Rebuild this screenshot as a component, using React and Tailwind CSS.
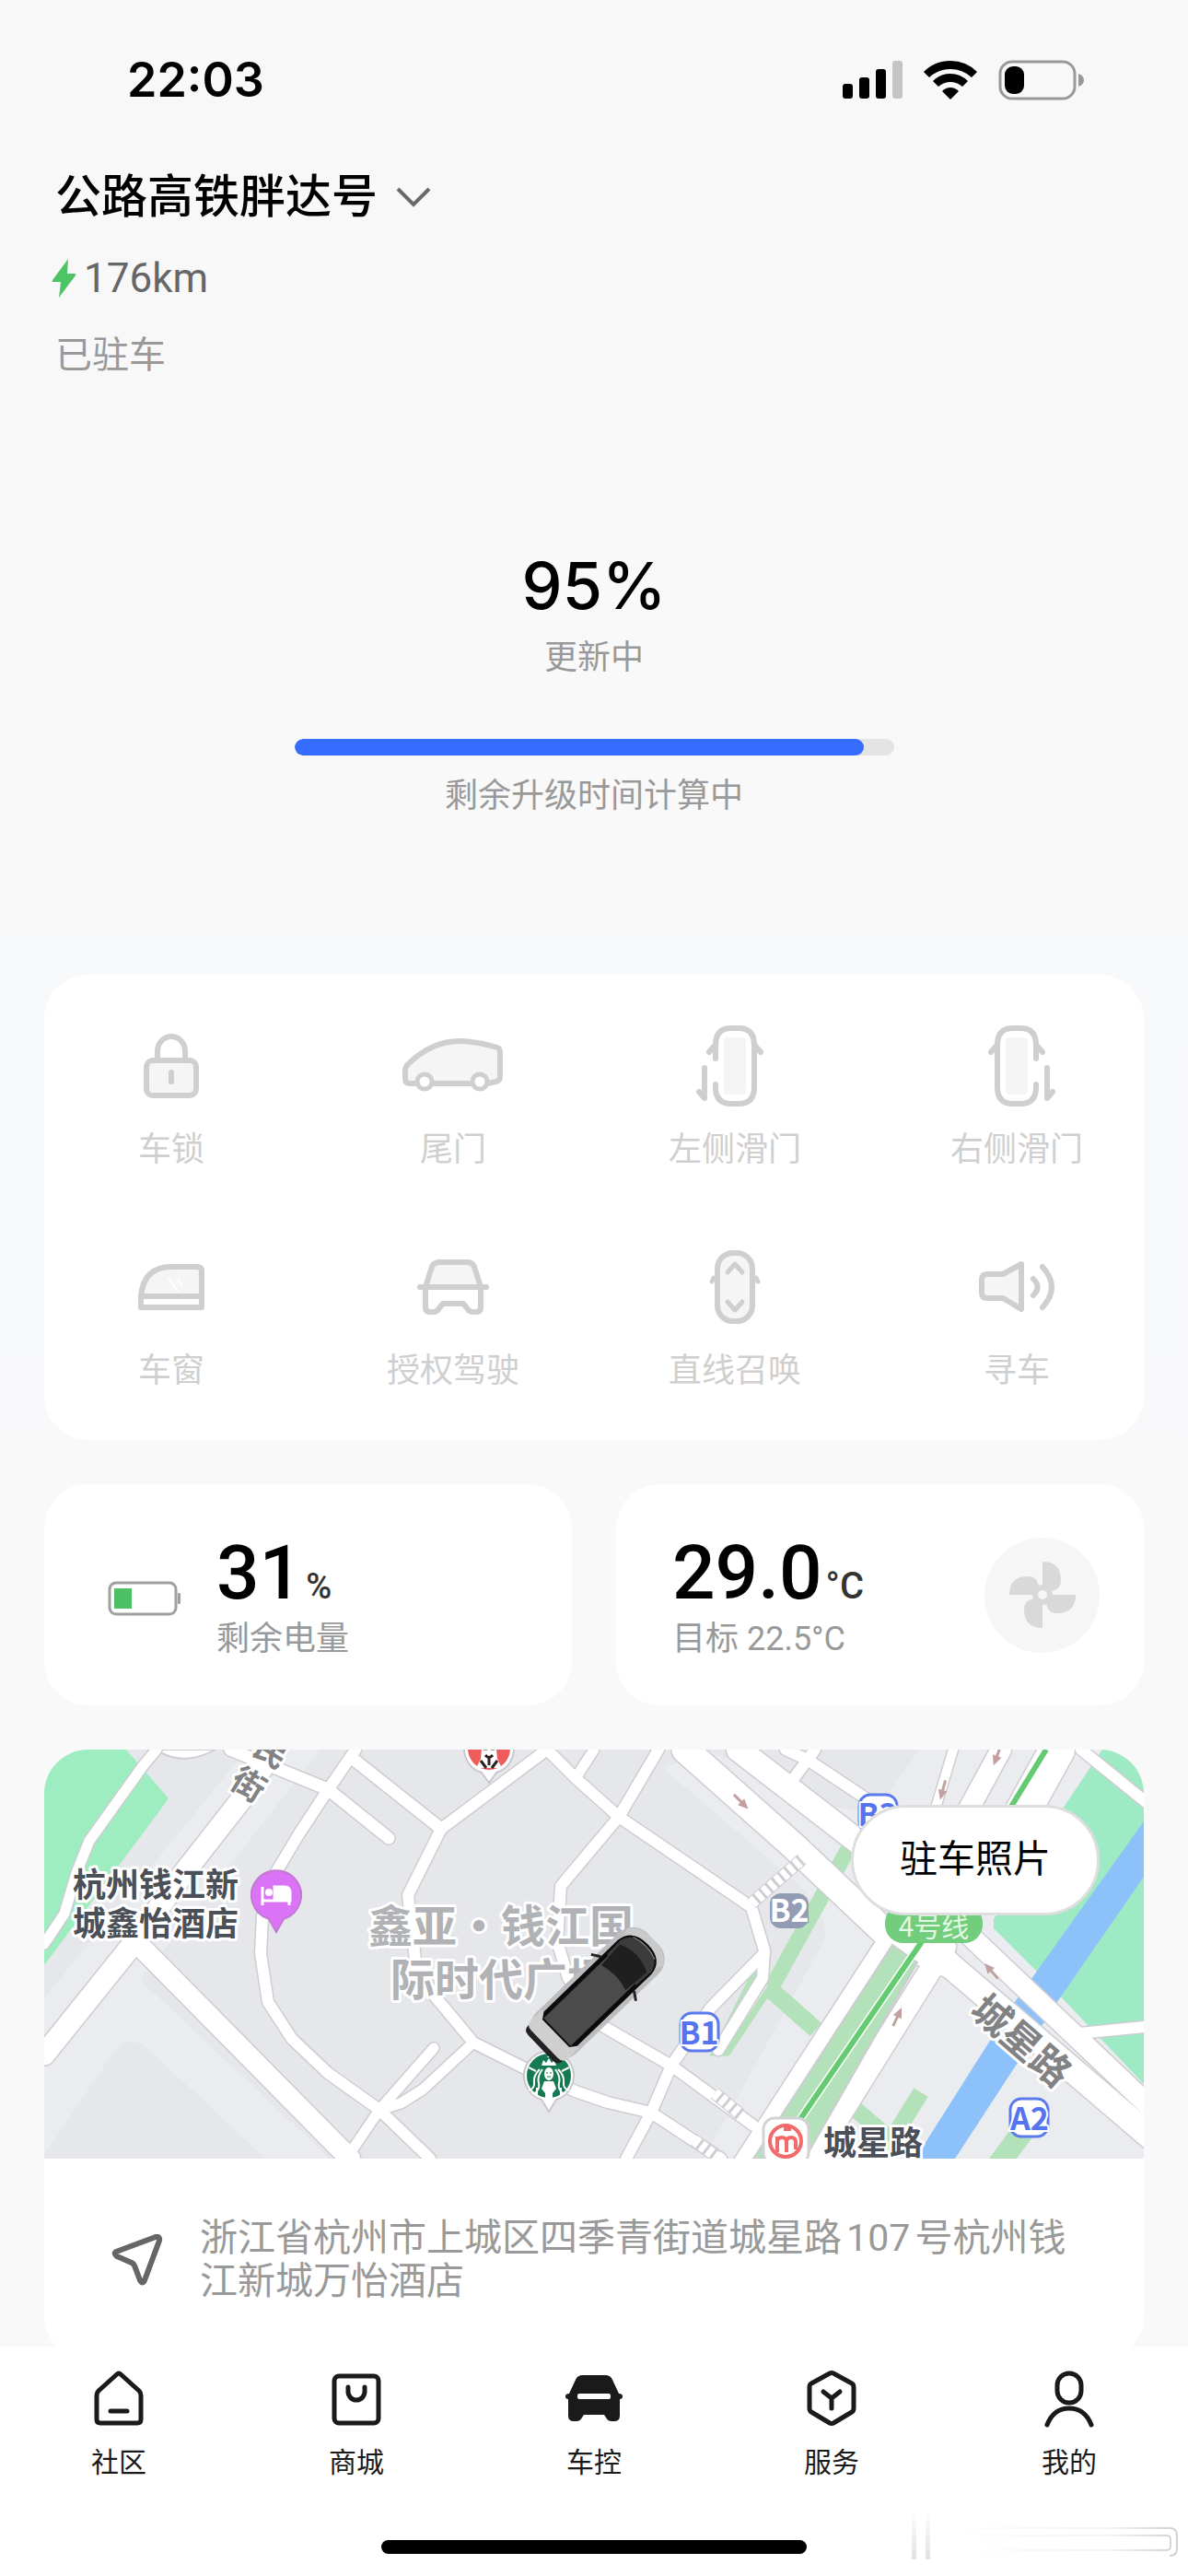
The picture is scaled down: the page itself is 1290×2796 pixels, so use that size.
import React from 'react';

const battery = 31;
const updateProgress = 95;

const LockIcon = () => (
  <svg width="62" height="72" viewBox="0 0 62 72" fill="none" stroke="#cfcfcf" strokeWidth="6">
    <path d="M16 30V20a15 16 0 0 1 30 0v10" />
    <rect x="4" y="30" width="54" height="38" rx="7" fill="#f5f5f5" />
    <path d="M31 43v10" strokeLinecap="round" />
  </svg>
);

const TailgateIcon = () => (
  <svg width="110" height="62" viewBox="0 0 110 62" fill="none" stroke="#cfcfcf" strokeWidth="6" strokeLinejoin="round">
    <path
      d="M14 50H8q-5 0-5-5V36q0-4 3-7Q32 4 62 4q18 0 41 7q3 1 3 5v27q0 4-4 5l-10 2H14Z"
      fill="#f5f5f5"
    />
    <circle cx="24" cy="48" r="8" fill="#fff" strokeWidth="5" />
    <circle cx="84" cy="48" r="8" fill="#fff" strokeWidth="5" />
  </svg>
);

const LeftDoorIcon = () => (
  <svg width="84" height="90" viewBox="0 0 84 90" fill="none" stroke="#cfcfcf" strokeWidth="6" strokeLinecap="round" strokeLinejoin="round">
    <rect x="30" y="14" width="24" height="62" rx="4" fill="#f5f5f5" stroke="none" />
    <path d="M21 37V22Q21 4 38 4h8Q63 4 63 22V68Q63 86 46 86h-8Q21 86 21 68V65" />
    <path d="M19 24l-5 6M65 24l5 6M9 47v33l-6-7" />
  </svg>
);

const RightDoorIcon = () => (
  <svg width="84" height="90" viewBox="0 0 84 90" fill="none" stroke="#cfcfcf" strokeWidth="6" strokeLinecap="round" strokeLinejoin="round">
    <rect x="30" y="14" width="24" height="62" rx="4" fill="#f5f5f5" stroke="none" />
    <path d="M63 37V22Q63 4 46 4h-8Q21 4 21 22V68Q21 86 38 86h8Q63 86 63 68V65" />
    <path d="M65 24l5 6M19 24l-5 6M75 47v33l6-7" />
  </svg>
);

const WindowIcon = () => (
  <svg width="72" height="52" viewBox="0 0 72 52" fill="none" stroke="#cfcfcf" strokeWidth="6" strokeLinejoin="round">
    <path d="M3 36Q6 4 36 4H64q5 0 5 5V36Z" fill="#f5f5f5" />
    <path d="M3 36V48H69V36" />
    <path d="M33 16l10 15M43 17l5 8" stroke="#fff" strokeWidth="2" />
  </svg>
);

const CarFrontIcon = () => (
  <svg width="78" height="62" viewBox="0 0 78 62" fill="none" stroke="#cfcfcf" strokeWidth="6" strokeLinecap="round" strokeLinejoin="round">
    <path d="M9 31L16 9q2-5 8-5H54q6 0 8 5L69 31Z" fill="#f5f5f5" />
    <path d="M3 31H75M9 31V53q0 5 5 5h4q3 0 5-3l5-6H50l5 6q2 3 5 3h4q5 0 5-5V31" />
  </svg>
);

const SummonIcon = () => (
  <svg width="56" height="82" viewBox="0 0 56 82" fill="none" stroke="#cfcfcf" strokeWidth="6" strokeLinecap="round" strokeLinejoin="round">
    <path d="M5 31l-2 4M51 31l2 4" strokeWidth="5" />
    <rect x="9" y="4" width="38" height="74" rx="17" fill="#f5f5f5" />
    <path d="M20 25l8-9 8 9M20 57l8 9 8-9" strokeWidth="5" />
  </svg>
);

const HornIcon = () => (
  <svg width="84" height="56" viewBox="0 0 84 56" fill="none" stroke="#cfcfcf" strokeWidth="6" strokeLinecap="round" strokeLinejoin="round">
    <path d="M27 14H10q-6 0-6 6V34q0 6 6 6H27L47 52V3Z" fill="#f5f5f5" />
    <path d="M60 19q9 9 0 18M70 6q20 22 0 44" />
  </svg>
);

const controls = [
  { label: '车锁', icon: LockIcon },
  { label: '尾门', icon: TailgateIcon },
  { label: '左侧滑门', icon: LeftDoorIcon },
  { label: '右侧滑门', icon: RightDoorIcon },
  { label: '车窗', icon: WindowIcon },
  { label: '授权驾驶', icon: CarFrontIcon },
  { label: '直线召唤', icon: SummonIcon },
  { label: '寻车', icon: HornIcon },
];

const HomeIcon = () => (
  <svg width="64" height="64" viewBox="0 0 64 64" fill="none" stroke="#1a1a1a" strokeWidth="5" strokeLinecap="round" strokeLinejoin="round">
    <path d="M8 29q0-3 2-5L30 6q2-2 4 0L54 24q2 2 2 5V55q0 4-4 4H12q-4 0-4-4Z" />
    <path d="M23 46H41" />
  </svg>
);

const ShopIcon = () => (
  <svg width="64" height="64" viewBox="0 0 64 64" fill="none" stroke="#1a1a1a" strokeWidth="5" strokeLinecap="round">
    <rect x="8" y="8" width="48" height="51" rx="5" />
    <path d="M23 20v5a9 9 0 0 0 18 0V20" />
  </svg>
);

const CarIcon = () => (
  <svg width="64" height="64" viewBox="0 0 64 64" fill="#1a1a1a">
    <path d="M5 27L12 12q2-5 8-5H44q6 0 8 5L59 27q4 0 4 3t-3 3V51q0 6-6 6H51q-4 0-6-4l-2-3H21l-2 3q-2 4-6 4H10q-6 0-6-6V33Q1 33 1 30t4-3Z" />
    <rect x="14" y="27" width="36" height="6" rx="2" fill="#fff" />
  </svg>
);

const ServiceIcon = () => (
  <svg width="64" height="64" viewBox="0 0 64 64" fill="none" stroke="#1a1a1a" strokeWidth="5" strokeLinecap="round" strokeLinejoin="round">
    <path d="M30 5q2-1 4 0L54 16q2 1 2 4V43q0 3-2 4L34 59q-2 1-4 0L10 47q-2-1-2-4V20q0-3 2-4Z" />
    <path d="M23 25l9 7 9-7M32 32V43" />
  </svg>
);

const ProfileIcon = () => (
  <svg width="64" height="64" viewBox="0 0 64 64" fill="none" stroke="#1a1a1a" strokeWidth="5" strokeLinecap="round">
    <rect x="19" y="5" width="26" height="32" rx="13" />
    <path d="M8 61Q15 43 32 43T56 61" />
  </svg>
);

const tabs = [
  { label: '社区', icon: HomeIcon },
  { label: '商城', icon: ShopIcon },
  { label: '车控', icon: CarIcon },
  { label: '服务', icon: ServiceIcon },
  { label: '我的', icon: ProfileIcon },
];

// [path, width]
const roads = [
  ['M122 0L107 18L49 99L35 134L22 178L0 211', 11],
  ['M250 0L215 53L150 136L94 214L0 331', 23],
  ['M98 207L332 444', 22],
  ['M202 0L308 43L374 96', 13],
  ['M338 0L308 44L277 91L253 131L237 181L235 221L243 274L269 314L308 351L364 391L419 444', 12],
  ['M334 9L431 86', 13],
  ['M546 0L431 86L395 158L403 228L421 264L466 318L526 348L577 371L612 383L659 394', 12],
  ['M466 318L411 369L387 384L364 391', 11],
  ['M423 324L364 391L328 444', 11],
  ['M546 0L577 31L624 73L768 171L782 218L780 248L732 326', 12],
  ['M597 0L577 31', 11],
  ['M667 0L624 73L592 111L561 148L557 208L569 248L608 301L681 343L770 408', 12],
  ['M782 221L724 280L681 343L659 394L632 444', 12],
  ['M659 394L735 444', 12],
  ['M805 0L829 11L895 55', 12],
  ['M837 0L809 38', 12],
  ['M987 0L966 70', 10],
  ['M1039 0L990 90', 22],
  ['M1100 0L1050 90', 38],
  ['M754 0L885 101L930 150', 26],
  ['M696 0L813 104L920 205L980 232', 29],
  ['M1003 200L1201 388', 22],
  ['M960 214L1201 420', 27],
  ['M930 190L760 452', 26],
  ['M978 214L855 411L837 450', 24],
  ['M1114 309L1194 301', 12],
  ['M1126 0L1200 60', 12],
];

const laneArrows = [
  [756, 56, 135],
  [976, 43, 195],
  [1035, 6, 200],
  [926, 291, 25],
  [1029, 241, 318],
];

function ParkingMap() {
  return (
    <svg viewBox="0 0 1194 444" className="block h-auto w-full bg-[#e6e7ea] font-['Noto_Sans_CJK_SC',sans-serif]" role="img" aria-label="停车位置">
      {/* land */}
      <path d="M300 0L104 250L310 444H240L112 324Q94 310 78 324L0 440V270L220 0Z" fill="#ebecef" />
      <path d="M672 20L800 130Q850 170 848 205L716 444H1194V0H950L900 70L850 60L720 0Z" fill="#ebecef" />
      <path d="M0 0H89L135 53L122 71L0 234Z" fill="#9eedc0" />
      <path d="M1149 0H1194V363L1078 241L1031 194V184L1108 61Z" fill="#9deac4" />
      <path d="M1194 78V138L1102 271L989 444H950L956 428L1049 281Z" fill="#8dc1fa" />
      <g fill="none" stroke="#b3e1b9">
        <path d="M886 84L790 258" strokeWidth="17" />
        <path d="M786 258L838 304" strokeWidth="19" />
        <path d="M778 230L728 329H742L790 256" strokeWidth="7" />
        <path d="M878 388L920 424L952 372" strokeWidth="18" />
        <path d="M1066 410L1035 452" strokeWidth="24" />
      </g>
      <path d="M126 3Q154 18 186 0H122Z" fill="#fff" stroke="#cfcfd3" strokeWidth="2" />

      {/* roads: casing first, then surface */}
      <g fill="none" stroke="#cdcdd2" strokeLinecap="round" strokeLinejoin="round">
        {roads.map(([d, w]) => (
          <path key={d} d={d} strokeWidth={w + 3} />
        ))}
      </g>
      <g fill="none" stroke="#fff" strokeLinecap="round" strokeLinejoin="round">
        {roads.map(([d, w]) => (
          <path key={d} d={d} strokeWidth={w} />
        ))}
      </g>
      <path d="M921 212L948 231L826 444H770Z" fill="#b3e1b9" stroke="#cdcdd2" strokeWidth="2" />
      <g fill="none">
        <path d="M768 167L823 119M728 373L756 396M706 424L730 442" stroke="#cdcdd2" strokeWidth="14" />
        <path d="M768 167L823 119M728 373L756 396M706 424L730 442" stroke="#fff" strokeWidth="12" strokeDasharray="6 3" />
      </g>
      <path d="M1088 0L1045 70M956 204L821 401" stroke="#fff" strokeWidth="9" />
      <path d="M1088 0L1045 70M956 204L821 401" stroke="#65cb72" strokeWidth="6" />
      {laneArrows.map(([x, y, angle]) => (
        <g key={x} transform={`translate(${x} ${y}) rotate(${angle})`}>
          <path d="M0 10V-2" stroke="#c0a19f" strokeWidth="3" />
          <path d="M-5 -1L0 -12L5 -1Z" fill="#c0a19f" />
        </g>
      ))}

      {/* street and area names */}
      <g fontWeight="700" textAnchor="middle" stroke="#fff" strokeWidth="6" strokeLinejoin="round" paintOrder="stroke">
        <g fill="#828284" fontSize="36">
          <text transform="translate(222 38) rotate(32)" y="13">街</text>
          <text transform="translate(247 2) rotate(32)" y="13">民</text>
          <text transform="translate(1061 316) rotate(41)" y="15" fontSize="42">城星路</text>
        </g>
        <text fill="#b1b2b5" fontSize="48">
          <tspan x="496" y="209">鑫亚·钱江国</tspan>
          <tspan x="496" y="267">际时代广场</tspan>
        </text>
        <text fill="#4b4f58" fontSize="36">
          <tspan x="121" y="160">杭州钱江新</tspan>
          <tspan x="121" y="202">城鑫怡酒店</tspan>
        </text>
        <text x="900" y="440" fill="#4b4f58" fontSize="36">城星路</text>
      </g>

      {/* metro line and exits */}
      <rect x="913" y="168" width="106" height="42" rx="20" fill="#72cd7c" />
      <text x="966" y="203" textAnchor="middle" fontSize="30" fill="#e2f8e4">4号线</text>
      <g fontSize="34" fontWeight="700" textAnchor="middle" strokeLinejoin="round">
        <rect x="788" y="156" width="42" height="38" rx="12" fill="#929cb5" />
        <text x="809" y="187" fill="#fff" stroke="#929cb5" strokeWidth="3" paintOrder="stroke">B2</text>
        <g fill="#fff" stroke="#5b7af0" strokeWidth="3">
          <rect x="691" y="286" width="41" height="41" rx="12" />
          <rect x="885" y="49" width="41" height="41" rx="12" />
          <rect x="1049" y="379" width="41" height="41" rx="12" />
        </g>
        <g fill="#5574f0" stroke="#fff" strokeWidth="4" paintOrder="stroke">
          <text x="711" y="320">B1</text>
          <text x="905" y="83">B3</text>
          <text x="1070" y="413">A2</text>
        </g>
      </g>
      <rect x="781" y="400" width="49" height="50" rx="12" fill="#fff" stroke="#d3d3d6" strokeWidth="3" />
      <g fill="none" stroke="#f26a6a" strokeWidth="4">
        <circle cx="805" cy="425" r="17" />
        <path d="M796 437V420M796 426q0-5 5-5t5 5v11M806 426q0-5 5-5t5 5v8M803 412h8" strokeWidth="4" />
      </g>

      {/* hotel */}
      <path d="M252 198L244 184A27 27 0 1 1 260 184Z" fill="#da73f5" stroke="#c07ad2" strokeWidth="2" />
      <path d="M237 149V169M237 164H267V155q0-6-6-6H250V164M266 164v5" fill="none" stroke="#fff" strokeWidth="3" />
      <path d="M251 150h10q6 0 6 6v7H251Z" fill="#fff" />
      <circle cx="244" cy="155" r="4" fill="#fff" />

      {/* fried chicken */}
      <path d="M483 36L475 25A27 27 0 1 1 491 25Z" fill="#fff" stroke="#c9c9cd" strokeWidth="2" />
      <circle cx="483" cy="-1" r="23" fill="#ee5c5c" />
      <path d="M475 0q8 -8 16 0l1 10 5 10H469l5-10Z" fill="#fff" />
      <path d="M477 -1h4M485 -1h4M479 6q4 5 8 0M483 8v9M474 12l6 8M492 12l-6 8" fill="none" stroke="#2d2020" strokeWidth="3" />

      {/* coffee shop */}
      <path d="M548 393L540 380A27 27 0 1 1 556 380Z" fill="#fff" stroke="#c9c9cd" strokeWidth="2" />
      <circle cx="548" cy="354" r="24" fill="#157a52" />
      <g fill="none" stroke="#fff" strokeWidth="2">
        <path d="M541 347q-6 8-4 15t-6 12M538 347q-7 7-6 14t-6 9M555 347q6 8 4 15t6 12M558 347q7 7 6 14t6 9M535 367v8M561 367v8M526 345l8 4M570 345l-8 4" />
      </g>
      <ellipse cx="548" cy="352" rx="5" ry="7" fill="#fff" />
      <path d="M540 343l2-6 3 3 3-5 3 5 3-3 2 6ZM548 331l2 3h-4ZM543 360h10l3 8-4 5v5h-8v-5l-4-5Z" fill="#fff" />
      <path d="M545 351h2M549 351h2M546 355h4" stroke="#157a52" strokeWidth="1" />

      {/* vehicle seen from above */}
      <g transform="translate(598 267) rotate(46)">
        <rect x="-31" y="-88" width="62" height="168" rx="22" fill="#bcbdbf" />
        <path d="M-28 -76Q-20 -88 0 -88T28 -76L22 -60H-22Z" fill="#c9cacb" />
        <path d="M-27 56V74q0 8 8 8H19q8 0 8-8V56Z" fill="#222" />
        <path d="M-29 52H29V68q0 8-8 8H-21q-8 0-8-8Z" fill="#cfcfd0" />
        <path d="M-26 -60Q-24 -80 0 -80T26 -60V52L21 59H-21L-26 52Z" fill="#0b0b0b" />
        <path d="M-24 -62Q-20 -78 0 -78T24 -62L23 -40H-23Z" fill="#3c3c3c" />
        <path d="M-21 -40H21V57H-21Z" fill="#4b4b4b" />
        <path d="M-21 -58Q0 -68 21 -58L19 -28Q0 -34 -19 -28Z" fill="#1f1f1f" />
        <path d="M-17 -74Q0 -80 17 -74" fill="none" stroke="#8e8e8e" strokeWidth="1" />
        <path d="M-26 -34l-9 6M26 -34l9 6" stroke="#222" strokeWidth="3" />
      </g>
    </svg>
  );
}

function StatusBar() {
  return (
    <div className="flex h-[174px] items-center justify-between pr-[113px] pl-[138px]">
      <span className="font-['Inter',sans-serif] text-[52px] font-semibold">22:03</span>
      <div className="flex items-center gap-[23px]">
        <svg width="65" height="42" viewBox="0 0 65 42">
          <rect x="0" y="25" width="11" height="16" rx="3" />
          <rect x="18" y="18" width="11" height="23" rx="3" />
          <rect x="36" y="9" width="11" height="32" rx="3" />
          <rect x="54" y="0" width="11" height="41" rx="3" fill="#c4c4c4" />
        </svg>
        <svg width="58" height="42" viewBox="0 0 58 42">
          <path d="M0 12Q12 0 29 0T58 12L52 18Q42 9 29 9T6 18Z" />
          <path d="M10 22Q18 14 29 14T48 22L42 28Q36 23 29 23T16 28Z" />
          <path d="M20 33Q24 29 29 29T38 33L29 42Z" />
        </svg>
        <svg width="93" height="44" viewBox="0 0 93 44">
          <rect x="2" y="2" width="81" height="40" rx="13" fill="none" stroke="#999" strokeWidth="3" />
          <rect x="7" y="7" width="21" height="30" rx="9" />
          <path d="M87 15q6 2 6 7t-6 7Z" fill="#999" />
        </svg>
      </div>
    </div>
  );
}

export default function App() {
  return (
    <div lang="zh-CN" className="flex h-screen flex-col bg-[#f9f9f9] font-['Roboto','Noto_Sans_CJK_SC',sans-serif] text-black">
      <main className="min-h-0 flex-1 overflow-y-auto [scrollbar-width:none]">
        <header className="bg-[#f8f8f8] pb-[52px]">
          <StatusBar />
          <div className="px-14 pt-2">
            <button type="button" className="flex items-center gap-5 pl-1 text-[50px] leading-[64px] font-medium">
              公路高铁胖达号
              <svg width="38" height="24" viewBox="0 0 38 24" fill="none" stroke="#6a6a6a" strokeWidth="4">
                <path d="M2 3L19 20L36 3" />
              </svg>
            </button>
            <div className="mt-7 flex items-center gap-2 text-[44px] leading-[56px] text-[#666]">
              <svg width="27" height="42" viewBox="0 0 27 42" fill="#4dc566">
                <path d="M18 0L1 23q-1 2 1 2h8L8 42L26 18q1-2-1-2H17Z" />
              </svg>
              176km
            </div>
            <p className="mt-8 pl-1 text-[40px] leading-[48px] text-[#999]">已驻车</p>
          </div>
        </header>

        <section className="flex flex-col items-center bg-[#f9f9f9] pt-[132px] pb-[122px]">
          <p className="font-['Inter',sans-serif] text-[70px] leading-[84px] font-medium">{updateProgress}%</p>
          <p className="mt-3 text-[36px] leading-[48px] text-[#999]">更新中</p>
          <div
            role="progressbar"
            aria-valuenow={updateProgress}
            aria-valuemin={0}
            aria-valuemax={100}
            aria-label="更新中"
            className="mt-16 h-[18px] w-[651px] max-w-full overflow-hidden rounded-full bg-[#e4e4e4]"
          >
            <div className="h-full rounded-full bg-[#356eff]" style={{ width: `${updateProgress}%` }} />
          </div>
          <p className="mt-5 text-[36px] leading-[48px] text-[#999]">剩余升级时间计算中</p>
        </section>

        <div className="flex flex-col gap-12 bg-linear-to-b from-[#f8f9fb] to-[#f9f9f9] px-12 pt-12">
          <section className="grid grid-cols-[repeat(4,180px)] justify-between gap-y-20 rounded-[48px] bg-white px-12 pt-[54px] pb-[51px]">
            {controls.map(({ label, icon: Icon }) => (
              <button key={label} type="button" disabled className="flex flex-col items-center gap-[22px] text-[36px] leading-[48px] text-[#cfcfcf]">
                <span className="flex h-[90px] items-center">
                  <Icon />
                </span>
                {label}
              </button>
            ))}
          </section>

          <div className="grid grid-cols-2 gap-12">
            <section className="flex items-center gap-[39px] rounded-[48px] bg-white px-[69px] pt-14 pb-12">
              <svg width="79" height="38" viewBox="0 0 79 38">
                <rect x="2" y="2" width="72" height="34" rx="7" fill="none" stroke="#a0a0a0" strokeWidth="3" />
                <rect x="7" y="8" width="19" height="22" fill="#4cc063" />
                <rect x="76" y="13" width="3" height="12" rx="1" fill="#a0a0a0" />
              </svg>
              <div>
                <p className="flex items-baseline gap-1 text-[82px] leading-[80px] font-medium">
                  {battery}
                  <span className="text-[38px] leading-10 text-[#333]">%</span>
                </p>
                <p className="mt-2 text-[36px] leading-[48px] text-[#999]">剩余电量</p>
              </div>
            </section>

            <section className="flex items-center justify-between rounded-[48px] bg-white pt-14 pr-12 pb-12 pl-[61px]">
              <div>
                <p className="flex items-baseline gap-1 text-[82px] leading-[80px] font-medium">
                  29.0
                  <span className="text-[40px] leading-10 text-[#333]">°C</span>
                </p>
                <p className="mt-2 text-[36px] leading-[48px] text-[#999]">目标 22.5°C</p>
              </div>
              <button type="button" aria-label="空调" className="mb-2 flex size-[125px] items-center justify-center rounded-full bg-[#f6f6f6]">
                <svg width="72" height="72" viewBox="0 0 72 72" fill="#d9d9d9">
                  <path d="M36 0q20 0 20 20q0 12-14 12L36 36Z" />
                  <path d="M72 36q0 20-20 20q-12 0-12-14L36 36Z" />
                  <path d="M36 72q-20 0-20-20q0-12 14-12L36 36Z" />
                  <path d="M0 36q0-20 20-20q12 0 12 14L36 36Z" />
                  <circle cx="36" cy="36" r="11" />
                  <circle cx="36" cy="36" r="5" fill="#f6f6f6" />
                </svg>
              </button>
            </section>
          </div>

          <section className="relative overflow-hidden rounded-[48px] bg-white">
            <ParkingMap />
            <button
              type="button"
              className="absolute top-[60px] right-12 h-[120px] rounded-full border-[3px] border-[#dedede] bg-white px-[50px] text-[41px]"
            >
              驻车照片
            </button>
            <div className="flex items-center gap-10 pt-[63px] pr-16 pb-[62px] pl-[73px]">
              <svg width="56" height="56" viewBox="0 0 56 56" className="shrink-0" fill="none" stroke="#666" strokeWidth="6" strokeLinejoin="round">
                <path d="M5 19L48 3q5-1 4 4L36 50q-2 5-5 0L25 34q-1-2-3-3L6 24q-4-3-1-5Z" />
              </svg>
              <p className="flex-1 text-[41px] leading-[47px] text-[#999] [text-autospace:normal]">
                浙江省杭州市上城区四季青街道城星路107号杭州钱江新城万怡酒店
              </p>
            </div>
          </section>
        </div>
      </main>

      <nav className="bg-white pt-6 pb-6">
        <div className="grid grid-cols-5">
          {tabs.map(({ label, icon: Icon }) => (
            <a key={label} href="#" className="flex flex-col items-center gap-4 text-[30px] leading-[44px] text-[#1a1a1a]">
              <Icon />
              {label}
            </a>
          ))}
        </div>
        <div className="relative mt-[62px]">
          <div className="mx-auto h-[15px] w-[462px] rounded-full bg-black" />
          <svg width="300" height="60" viewBox="0 0 300 60" className="absolute right-0 -bottom-3" fill="none">
            <defs>
              <linearGradient id="fade" x1="0" y1="0" x2="1" y2="0">
                <stop offset="0" stopColor="#fff" />
                <stop offset="0.7" stopColor="#f4f4f4" />
                <stop offset="1" stopColor="#d2d2d2" />
              </linearGradient>
              <linearGradient id="rise" x1="0" y1="0" x2="0" y2="1">
                <stop offset="0" stopColor="#fff" />
                <stop offset="1" stopColor="#e2e2e2" />
              </linearGradient>
            </defs>
            <path d="M0 0H5V54H0ZM15 0H20V54H15Z" fill="url(#rise)" />
            <path d="M40 20H280q8 0 8 8V42q0 8-8 8M40 28H276q5 0 5 4v8q0 4-5 4H60" stroke="url(#fade)" strokeWidth="2" />
          </svg>
        </div>
      </nav>
    </div>
  );
}
